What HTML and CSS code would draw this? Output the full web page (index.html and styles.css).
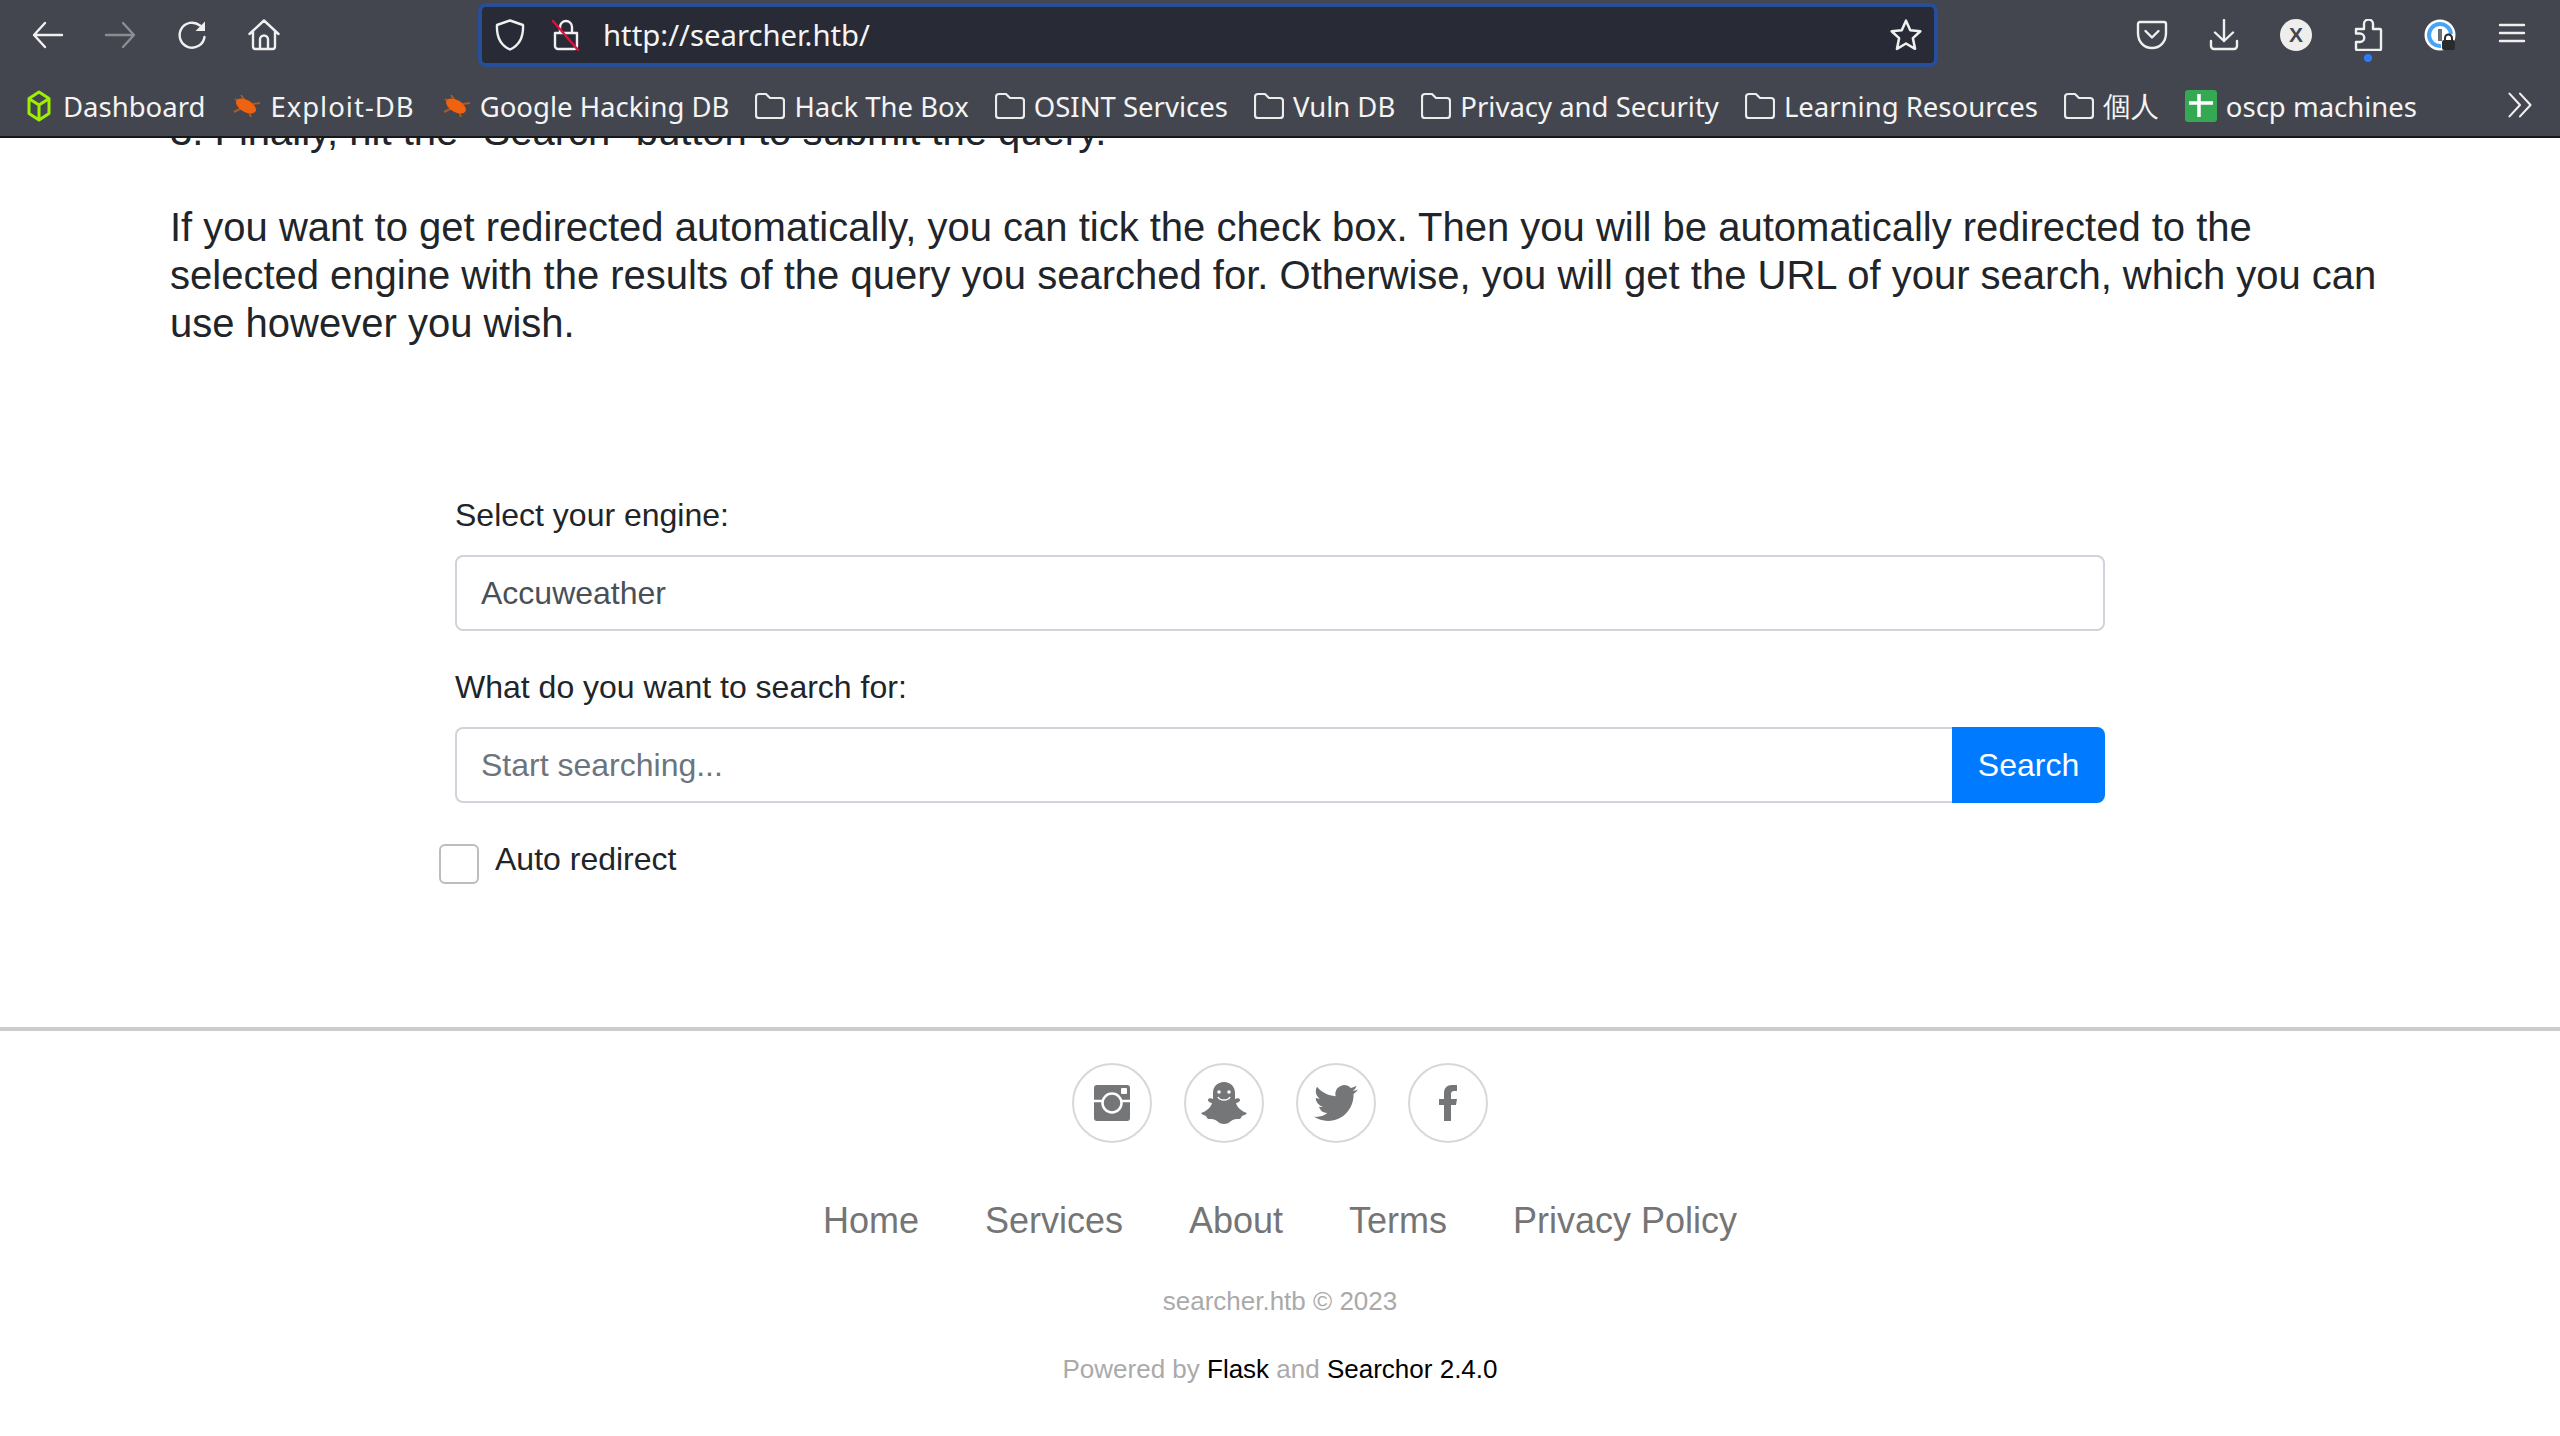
FILE: index.html
```html
<!DOCTYPE html>
<html lang="en">
<head>
    <meta charset="UTF-8">
    <title>Searcher</title>
    <link rel="stylesheet" href="styles.css">
</head>
<body>
    <header class="browser">
        <div class="nav-row">
            <div class="nav-buttons">
                <span class="tool"><svg class="icon" viewBox="0 0 32 32"><path d="M13 4 2 16l11 12M2.500 16H30"/></svg></span>
                <span class="tool muted"><svg class="icon" viewBox="0 0 32 32"><path d="M19 4l11 12-11 12M29.500 16H2"/></svg></span>
                <span class="tool"><svg class="icon" viewBox="0 0 32 32"><path d="M28.500 18A12.500 12.500 0 1 1 24 6.500"/><path class="solid" d="M29 2.500V12H19.500z"/></svg></span>
                <span class="tool"><svg class="icon" viewBox="0 0 32 32"><path d="M1.500 15 16 1.500 30.500 15M5 12v15.500A2.500 2.500 0 0 0 7.500 30h17a2.500 2.500 0 0 0 2.500-2.500V12M12 30v-9.500a4 4 0 0 1 8 0V30"/></svg></span>
            </div>
            <div class="url-bar">
                <svg class="icon shield" viewBox="0 0 32 32"><path d="M16 1.500 29 6c.6 12-3 20-13 24.500C6 26 2.400 18 3 6z"/></svg>
                <svg class="icon lock" viewBox="0 0 32 32"><path d="M10 14V8a6 6 0 0 1 12 0v6M5 14h22v13a3 3 0 0 1-3 3H8a3 3 0 0 1-3-3z"/><path class="strike" d="M3 2l25 29"/></svg>
                <span class="url-text">http://searcher.htb/</span>
                <svg class="icon star" viewBox="0 0 32 32"><path d="M16 2.500l4 9 9.500 1-7 6.500 2 10-8.500-5-8.500 5 2-10-7-6.500 9.500-1z"/></svg>
            </div>
            <div class="nav-tools">
                <span class="tool"><svg class="icon" viewBox="0 0 32 32"><path d="M4 3h24a2 2 0 0 1 2 2v9c0 9-6 15-14 15S2 23 2 14V5a2 2 0 0 1 2-2zM9.500 12l6.500 6.500 6.500-6.500"/></svg></span>
                <span class="tool"><svg class="icon" viewBox="0 0 32 32"><path d="M16 1v21M7 13.500l9 8.500 9-8.500M3 22v5a3 3 0 0 0 3 3h20a3 3 0 0 0 3-3v-5"/></svg></span>
                <span class="tool"><svg class="icon" viewBox="0 0 32 32"><circle class="x-disc" cx="16" cy="16" r="16"/><text class="x-letter" x="16" y="23">X</text></svg></span>
                <span class="tool ext"><svg class="icon" viewBox="0 0 32 32"><path d="M4 10h8V5a4.500 4.500 0 0 1 9 0v5h7a1 1 0 0 1 1 1v19a1 1 0 0 1-1 1H5a1 1 0 0 1-1-1v-7h4a4 4 0 0 0 0-8.500H4z"/></svg><span class="ext-dot"></span></span>
                <span class="tool"><svg class="icon" viewBox="0 0 32 32"><circle class="pw-disc" cx="16" cy="16" r="15.500"/><path class="pw-ring" d="M17 27A11 11 0 1 1 27 15"/><rect class="pw-key" x="14" y="10" width="4" height="12"/><path class="pw-shackle" d="M21 22v-3a3.500 3.500 0 0 1 7 0v3"/><rect class="pw-lock" x="18" y="21" width="13" height="10" rx="2"/></svg></span>
                <span class="tool"><svg class="icon" viewBox="0 0 32 32"><path d="M4 6h24M4 14h24M4 22h24"/></svg></span>
            </div>
        </div>
        <nav class="bookmarks">
            <a class="mark"><svg class="fav" viewBox="0 0 24 32"><path class="cube" d="M12 2 22 8.500v15L12 30 2 23.500v-15zM2.500 9 12 15l9.500-6M12 15v15"/></svg>Dashboard</a>
            <a class="mark mark-wide"><svg class="fav" viewBox="0 0 30 32"><g class="bug"><path class="bug-legs" d="M10 5l5 7M4 9l7 4M22 14l7-1M3 22l8-4M18 22l2 5"/><ellipse class="bug-body" cx="15" cy="16" rx="11" ry="6" transform="rotate(30 15 16)"/></g></svg>Exploit-DB</a>
            <a class="mark"><svg class="fav" viewBox="0 0 30 32"><g class="bug"><path class="bug-legs" d="M10 5l5 7M4 9l7 4M22 14l7-1M3 22l8-4M18 22l2 5"/><ellipse class="bug-body" cx="15" cy="16" rx="11" ry="6" transform="rotate(30 15 16)"/></g></svg>Google Hacking DB</a>
            <a class="mark"><svg class="fav folder" viewBox="0 0 30 30"><path d="M4 3h7l4 4h11a3 3 0 0 1 3 3v14a3 3 0 0 1-3 3H4a3 3 0 0 1-3-3V6a3 3 0 0 1 3-3z"/></svg>Hack The Box</a>
            <a class="mark"><svg class="fav folder" viewBox="0 0 30 30"><path d="M4 3h7l4 4h11a3 3 0 0 1 3 3v14a3 3 0 0 1-3 3H4a3 3 0 0 1-3-3V6a3 3 0 0 1 3-3z"/></svg>OSINT Services</a>
            <a class="mark"><svg class="fav folder" viewBox="0 0 30 30"><path d="M4 3h7l4 4h11a3 3 0 0 1 3 3v14a3 3 0 0 1-3 3H4a3 3 0 0 1-3-3V6a3 3 0 0 1 3-3z"/></svg>Vuln DB</a>
            <a class="mark"><svg class="fav folder" viewBox="0 0 30 30"><path d="M4 3h7l4 4h11a3 3 0 0 1 3 3v14a3 3 0 0 1-3 3H4a3 3 0 0 1-3-3V6a3 3 0 0 1 3-3z"/></svg>Privacy and Security</a>
            <a class="mark"><svg class="fav folder" viewBox="0 0 30 30"><path d="M4 3h7l4 4h11a3 3 0 0 1 3 3v14a3 3 0 0 1-3 3H4a3 3 0 0 1-3-3V6a3 3 0 0 1 3-3z"/></svg>Learning Resources</a>
            <a class="mark"><svg class="fav folder" viewBox="0 0 30 30"><path d="M4 3h7l4 4h11a3 3 0 0 1 3 3v14a3 3 0 0 1-3 3H4a3 3 0 0 1-3-3V6a3 3 0 0 1 3-3z"/></svg>個人</a>
            <a class="mark"><svg class="fav sheet" viewBox="0 0 32 32"><rect class="sheet-bg" width="32" height="32" rx="3"/><path class="sheet-cross" d="M14 4v23M4 13h24"/></svg>oscp machines</a>
            <svg class="icon more" viewBox="0 0 32 32"><path d="M4 3l12 13L4 29M16 3l12 13-12 13"/></svg>
        </nav>
    </header>

    <main class="page">
        <div class="intro">
            <p>3. Finally, hit the "Search" button to submit the query.</p>
            <p class="intro-gap">If you want to get redirected automatically, you can tick the check box. Then you will be automatically redirected to the selected engine with the results of the query you searched for. Otherwise, you will get the URL of your search, which you can use however you wish.</p>
        </div>

        <form class="search-form">
            <div class="form-group">
                <label class="form-label" for="engine">Select your engine:</label>
                <div class="form-control" id="engine">Accuweather</div>
            </div>
            <div class="form-group">
                <label class="form-label" for="query">What do you want to search for:</label>
                <div class="input-group">
                    <input class="form-control" id="query" type="text" placeholder="Start searching...">
                    <button class="search-btn" type="button">Search</button>
                </div>
            </div>
            <div class="form-check">
                <input class="check-box" id="redirect" type="checkbox">
                <label for="redirect">Auto redirect</label>
            </div>
        </form>

        <footer class="site-footer">
            <div class="social">
                <a class="social-link">
                    <svg class="social-icon" viewBox="0 0 36 36"><rect width="36" height="36" rx="3"/><path class="cut" d="M0 16h8M28 16h8"/><circle class="cut" cx="18" cy="18" r="9.500"/><rect class="cut-fill" x="27" y="3" width="6" height="6" rx="1"/></svg>
                </a>
                <a class="social-link">
                    <svg class="social-icon" viewBox="0 0 46 42"><path d="M23 0c7 0 11 5 11 11v6c2-1 5-1 5 1 0 2-3 3-4 3 1 4 5 8 11 10-1 2-4 2-5 3-1 1-1 3-3 3-3 0-5 0-8 2-2 2-4 3-7 3s-5-1-7-3c-3-2-5-2-8-2-2 0-2-2-3-3-1-1-4-1-5-3 6-2 10-6 11-10-1 0-4-1-4-3 0-2 3-2 5-1v-6C12 5 16 0 23 0z"/><circle class="cut-fill" cx="18" cy="10" r="1.800"/><circle class="cut-fill" cx="28" cy="10" r="1.800"/><path class="cut thin" d="M17 15c2 4 10 4 12 0"/></svg>
                </a>
                <a class="social-link">
                    <svg class="social-icon bird" viewBox="0 0 24 24"><path d="M23.953 4.57a10 10 0 01-2.825.775 4.958 4.958 0 002.163-2.723c-.951.555-2.005.959-3.127 1.184a4.92 4.92 0 00-8.384 4.482C7.69 8.095 4.067 6.13 1.64 3.162a4.822 4.822 0 00-.666 2.475c0 1.71.87 3.213 2.188 4.096a4.904 4.904 0 01-2.228-.616v.06a4.923 4.923 0 003.946 4.827 4.996 4.996 0 01-2.212.085 4.936 4.936 0 004.604 3.417 9.867 9.867 0 01-6.102 2.105c-.39 0-.779-.023-1.17-.067a13.995 13.995 0 007.557 2.209c9.053 0 13.998-7.496 13.998-13.985 0-.21 0-.42-.015-.63A9.935 9.935 0 0024 4.59z"/></svg>
                </a>
                <a class="social-link">
                    <svg class="social-icon fb" viewBox="0 0 18 36"><path d="M5 36V20H0v-6h5V8c0-5 3-8 8-8h5v6h-3c-2 0-3 1-3 3v5h6l-1 6h-5v16z"/></svg>
                </a>
            </div>
            <ul class="footer-links">
                <li>Home</li>
                <li>Services</li>
                <li>About</li>
                <li>Terms</li>
                <li>Privacy Policy</li>
            </ul>
            <p class="copyright">searcher.htb © 2023</p>
            <p class="powered">Powered by <a>Flask</a> and <a>Searchor 2.4.0</a></p>
        </footer>
    </main>
</body>
</html>
```

FILE: styles.css
```css
* {
    box-sizing: border-box;
}
html, body {
    margin: 0;
    height: 100%;
    overflow: hidden;
}
body {
    font-family: "Liberation Sans", Arial, sans-serif;
    color: #212529;
    background-color: #fff;
    display: flex;
    flex-direction: column;
}

/* browser chrome */
.browser {
    height: 138px;
    flex: none;
    background-color: #43464e;
    border-bottom: 2px solid #16171a;
    color: #f4f4f4;
    font-family: "Noto Sans", sans-serif;
}
.nav-row {
    height: 70px;
    display: flex;
    align-items: center;
}
.nav-buttons {
    display: flex;
    padding-left: 12px;
    width: 478px;
}
.nav-tools {
    display: flex;
    margin-left: 178px;
}
.tool {
    width: 72px;
    height: 64px;
    display: flex;
    align-items: center;
    justify-content: center;
    position: relative;
}
.icon {
    width: 32px;
    height: 32px;
    fill: none;
    stroke: #f0f0f0;
    stroke-width: 2.4;
    stroke-linecap: round;
    stroke-linejoin: round;
}
.icon .solid {
    fill: #f0f0f0;
    stroke: none;
}
.tool.muted .icon {
    stroke: #8b8d92;
}
.url-bar {
    width: 1460px;
    height: 64px;
    background-color: #282a36;
    border: 4px solid #264f97;
    border-radius: 8px;
    display: flex;
    align-items: center;
    padding: 0 11px 0 12px;
}
.lock {
    margin-left: 24px;
}
.strike {
    stroke: #e0103f;
}
.url-text {
    margin-left: 21px;
    font-size: 29.3px;
    flex: 1;
    white-space: nowrap;
}
.star {
    width: 34px;
    height: 34px;
}
.x-disc {
    fill: #eeeeec;
    stroke: none;
}
.x-letter {
    fill: #43464e;
    stroke: none;
    font-family: "Liberation Sans", sans-serif;
    font-weight: bold;
    font-size: 21px;
    text-anchor: middle;
}
.ext-dot {
    position: absolute;
    left: 32px;
    top: 51px;
    width: 8px;
    height: 8px;
    border-radius: 50%;
    background-color: #2f7bf6;
}
.pw-disc {
    fill: #fff;
    stroke: none;
}
.pw-ring {
    stroke: #4aa3f5;
    stroke-width: 4;
    stroke-linecap: butt;
}
.pw-key {
    fill: #6a6f75;
    stroke: none;
}
.pw-shackle {
    stroke: #2b2b2b;
    stroke-width: 2;
}
.pw-lock {
    fill: #2b2b2b;
    stroke: none;
}

/* bookmarks */
.bookmarks {
    height: 66px;
    display: flex;
    align-items: center;
    gap: 26px;
    padding: 6px 0 0 24px;
    position: relative;
}
.mark {
    display: flex;
    align-items: center;
    gap: 9px;
    font-size: 27.5px;
    white-space: nowrap;
}
.mark-wide {
    letter-spacing: 1px;
}
.fav {
    width: 30px;
    height: 32px;
    fill: none;
    stroke: #ececec;
    stroke-width: 2.200;
    stroke-linejoin: round;
}
.fav.folder {
    height: 30px;
}
.cube {
    stroke: #9fef00;
    stroke-width: 3;
}
.bug-body {
    fill: #f0620f;
    stroke: none;
}
.bug-legs {
    stroke: #a85a28;
    stroke-width: 2;
}
.fav.sheet {
    width: 32px;
}
.sheet-bg {
    fill: #34a853;
    stroke: none;
}
.sheet-cross {
    stroke: #fff;
    stroke-width: 3.500;
}
.more {
    position: absolute;
    right: 26px;
    top: 20px;
    width: 28px;
    height: 30px;
}

/* page */
.page {
    flex: 1;
    overflow: hidden;
    display: flex;
    flex-direction: column;
}
.intro {
    margin-top: -31px;
    padding: 0 170px;
    font-size: 40px;
    line-height: 48px;
}
.intro p {
    margin: 0;
}
.intro .intro-gap {
    margin-top: 48px;
}
.search-form {
    width: 1650px;
    margin: 144px auto 0;
    font-size: 32px;
    line-height: 48px;
}
.form-group {
    margin-bottom: 32px;
}
.form-label {
    display: block;
    margin-bottom: 16px;
}
.form-control {
    display: block;
    width: 100%;
    height: 76px;
    padding: 12px 24px;
    font: inherit;
    color: #495057;
    background-color: #fff;
    border: 2px solid #ced4da;
    border-radius: 8px;
}
.form-control::placeholder {
    color: #6c757d;
    opacity: 1;
}
.input-group {
    display: flex;
}
.input-group .form-control {
    flex: 1;
    border-right: none;
    border-radius: 8px 0 0 8px;
}
.search-btn {
    width: 153px;
    border: none;
    border-radius: 0 8px 8px 0;
    background-color: #007bff;
    color: #fff;
    font: inherit;
}
.form-check {
    display: flex;
    align-items: flex-start;
    gap: 16px;
    margin-left: -16px;
}
.check-box {
    appearance: none;
    flex: none;
    width: 40px;
    height: 40px;
    margin: 9px 0 0;
    background-color: #fff;
    border: 2px solid #bdbdbd;
    border-radius: 6px;
}

/* footer */
.site-footer {
    margin-top: 143px;
    border-top: 4px solid #ccc;
    padding-top: 32px;
    text-align: center;
}
.social {
    display: flex;
    justify-content: center;
    gap: 32px;
}
.social-link {
    width: 80px;
    height: 80px;
    border: 2px solid #d8d8d8;
    border-radius: 50%;
    display: flex;
    align-items: center;
    justify-content: center;
}
.social-icon {
    width: 36px;
    height: 36px;
    fill: #757678;
}
.social-icon.bird {
    width: 44px;
    height: 44px;
}
.social-icon.fb {
    width: 18px;
}
.social-link:nth-child(2) .social-icon {
    width: 46px;
    height: 42px;
}
.cut {
    fill: none;
    stroke: #fff;
    stroke-width: 2.500;
}
.cut.thin {
    stroke-width: 1.500;
}
.cut-fill {
    fill: #fff;
}
.footer-links {
    list-style: none;
    margin: 54px 0 0;
    padding: 0;
    display: flex;
    justify-content: center;
    gap: 66px;
    font-size: 36px;
    line-height: 48px;
    color: #757575;
}
.copyright, .powered {
    margin: 0;
    font-size: 26px;
    line-height: 40px;
    color: #aaa;
}
.copyright {
    margin-top: 36px;
}
.powered {
    margin-top: 28px;
}
.powered a {
    color: #000;
}
```
